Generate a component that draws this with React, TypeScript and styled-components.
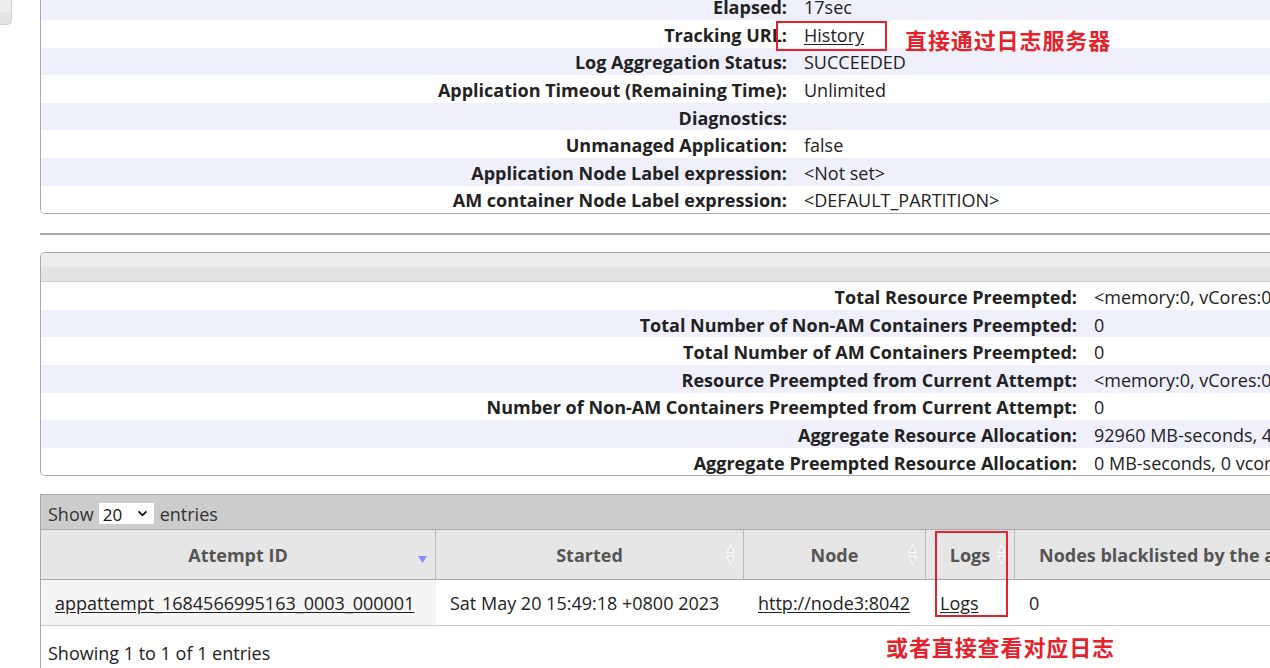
import React from 'react'
import styled, { createGlobalStyle } from 'styled-components'

const GlobalStyle = createGlobalStyle`
  html, body {
    margin: 0;
    padding: 0;
    background: #fff;
    overflow: hidden;
  }
  body {
    font-family: 'Open Sans', 'Noto Sans', 'Noto Sans CJK SC', sans-serif;
    font-size: 18px;
    color: #222;
  }
`

const appInfo = [
  ['Elapsed:', '17sec'],
  ['Tracking URL:', 'History'],
  ['Log Aggregation Status:', 'SUCCEEDED'],
  ['Application Timeout (Remaining Time):', 'Unlimited'],
  ['Diagnostics:', ''],
  ['Unmanaged Application:', 'false'],
  ['Application Node Label expression:', '<Not set>'],
  ['AM container Node Label expression:', '<DEFAULT_PARTITION>'],
]

const preemptInfo = [
  ['Total Resource Preempted:', '<memory:0, vCores:0>'],
  ['Total Number of Non-AM Containers Preempted:', '0'],
  ['Total Number of AM Containers Preempted:', '0'],
  ['Resource Preempted from Current Attempt:', '<memory:0, vCores:0>'],
  ['Number of Non-AM Containers Preempted from Current Attempt:', '0'],
  ['Aggregate Resource Allocation:', '92960 MB-seconds, 46 vcore-seconds'],
  ['Aggregate Preempted Resource Allocation:', '0 MB-seconds, 0 vcore-seconds'],
]

const App: React.FC = () => {
  return (
    <>
      <GlobalStyle />
      <StyledPage>
        <StyledNavStub />
        <StyledContent>
          <InfoPanel rows={appInfo} labelWidth={754} linkRow={1} first />
          <StyledRule />
          <InfoPanel rows={preemptInfo} labelWidth={1044} header shadeOdd />
          <AttemptTable />
        </StyledContent>

        <StyledMarkBox className='history' />
        <StyledNote className='top'>直接通过日志服务器</StyledNote>
        <StyledMarkBox className='logs' />
        <StyledNote className='bottom'>或者直接查看对应日志</StyledNote>
      </StyledPage>
    </>
  )
}

export default App

const StyledPage = styled.div`
  position: relative;
  display: flex;
  align-items: flex-start;
  gap: 28px;
  width: 1700px;
  height: 668px;
`

const StyledNavStub = styled.div`
  width: 11px;
  height: 24px;
  flex-shrink: 0;
  background: linear-gradient(#ededed 50%, #e4e4e4 50%);
  border: 1px solid #d0d0d0;
  border-top: none;
  border-left: none;
  border-radius: 0 0 5px 0;
`

const StyledContent = styled.div`
  flex: 1;
  display: flex;
  flex-direction: column;
`

const StyledRule = styled.div`
  height: 2px;
  background: #aaa;
  margin: 19px 0 17px;
`

type TInfoPanel = {
  rows: string[][]
  labelWidth: number
  linkRow?: number
  header?: boolean
  first?: boolean
  shadeOdd?: boolean
}

const InfoPanel: React.FC<TInfoPanel> = ({
  rows,
  labelWidth,
  linkRow,
  header,
  first,
  shadeOdd,
}) => {
  return (
    <StyledPanel first={first}>
      {header && <StyledPanelHead />}
      {rows.map(([label, value], i) => (
        <StyledInfoRow key={label} shaded={shadeOdd ? i % 2 === 1 : i % 2 === 0}>
          <StyledLabel style={{ width: labelWidth }}>{label}</StyledLabel>
          <StyledValue>
            {i === linkRow ? <StyledLink>{value}</StyledLink> : value}
          </StyledValue>
        </StyledInfoRow>
      ))}
    </StyledPanel>
  )
}

const StyledPanel = styled.div<{ first?: boolean }>`
  margin-top: ${({ first }) => (first ? '-8.5px' : '0')};
  border: 1px solid #aaa;
  border-right: none;
  border-radius: ${({ first }) => (first ? '0 0 0 5px' : '5px 0 0 5px')};
  overflow: hidden;
`

const StyledPanelHead = styled.div`
  height: 28px;
  background: linear-gradient(#ededed 50%, #e4e4e4 50%);
  border-bottom: 1px solid #ccc;
`

const StyledInfoRow = styled.div<{ shaded: boolean }>`
  display: flex;
  align-items: center;
  box-sizing: border-box;
  height: 27.6px;
  padding-top: 2px;
  background: ${({ shaded }) => (shaded ? '#f0f0fc' : '#fff')};
  white-space: nowrap;
`

const StyledLabel = styled.div`
  flex-shrink: 0;
  box-sizing: border-box;
  padding-right: 8px;
  text-align: right;
  font-weight: 700;
  color: #222;
`

const StyledValue = styled.div`
  padding-left: 9px;
  color: #222;
`

const StyledLink = styled.span`
  text-decoration: underline;
  text-underline-offset: 2px;
  color: #222;
`

const columns = [
  { title: 'Attempt ID', width: 395, sorted: true },
  { title: 'Started', width: 308 },
  { title: 'Node', width: 182 },
  { title: 'Logs', width: 89 },
  { title: 'Nodes blacklisted by the app master', width: 500, left: true },
]

const AttemptTable: React.FC = () => {
  return (
    <StyledTableBox>
      <StyledToolbar>
        Show
        <StyledSelectWrap>
          <StyledSelect defaultValue='20'>
            <option value='20'>20</option>
          </StyledSelect>
          <StyledChevron viewBox='0 0 12 8'>
            <path d='M1.5 1.5 L6 6 L10.5 1.5' fill='none' stroke='#111' strokeWidth='2' />
          </StyledChevron>
        </StyledSelectWrap>
        entries
      </StyledToolbar>

      <StyledGridRow className='head'>
        {columns.map((c) => (
          <StyledHeadCell key={c.title} width={c.width} left={c.left}>
            {c.title}
            {c.sorted ? (
              <StyledSortIcon viewBox='0 0 12 10'>
                <path d='M1 1 L11 1 L6 9 Z' fill='#8c8cf5' />
              </StyledSortIcon>
            ) : (
              !c.left && (
                <StyledSortIcon viewBox='0 0 12 22' className='both'>
                  <path
                    d='M6 1 L10 9 L2 9 Z M6 21 L10 13 L2 13 Z'
                    fill='#dcdcdc'
                    stroke='#fafafa'
                    strokeWidth='1.2'
                  />
                </StyledSortIcon>
              )
            )}
          </StyledHeadCell>
        ))}
      </StyledGridRow>

      <StyledGridRow>
        <StyledCell width={395} sorted>
          <StyledLink>appattempt_1684566995163_0003_000001</StyledLink>
        </StyledCell>
        <StyledCell width={308}>Sat May 20 15:49:18 +0800 2023</StyledCell>
        <StyledCell width={182}>
          <StyledLink>http://node3:8042</StyledLink>
        </StyledCell>
        <StyledCell width={89}>
          <StyledLink>Logs</StyledLink>
        </StyledCell>
        <StyledCell width={500}>0</StyledCell>
      </StyledGridRow>

      <StyledFooter>Showing 1 to 1 of 1 entries</StyledFooter>
    </StyledTableBox>
  )
}

const StyledTableBox = styled.div`
  margin-top: 18px;
  border-left: 1px solid #aaa;
  border-top: 1px solid #aaa;
  color: #222;
`

const StyledToolbar = styled.div`
  box-sizing: border-box;
  height: 34px;
  display: flex;
  align-items: center;
  gap: 5px;
  padding: 3px 0 0 7px;
  background: #ccc;
  color: #333;
`

const StyledSelectWrap = styled.div`
  position: relative;
  display: flex;
  margin-right: 1px;
`

const StyledSelect = styled.select`
  appearance: none;
  width: 55px;
  height: 21px;
  border: none;
  border-radius: 0;
  background: #fff;
  padding: 0 0 0 4px;
  font-family: inherit;
  font-size: 17px;
  color: #111;
  outline: none;
`

const StyledChevron = styled.svg`
  position: absolute;
  right: 6px;
  top: 7px;
  width: 11px;
  height: 7px;
  pointer-events: none;
`

const StyledGridRow = styled.div`
  display: flex;
  border-bottom: 1px solid #ccc;
  white-space: nowrap;
  &.head {
    height: 49px;
    background: #e6e6e6;
    border-top: 1px solid #aaa;
    border-bottom: 1px solid #aaa;
  }
`

const StyledHeadCell = styled.div<{ width: number; left?: boolean }>`
  position: relative;
  flex-shrink: 0;
  box-sizing: border-box;
  width: ${({ width }) => width}px;
  display: flex;
  align-items: center;
  justify-content: ${({ left }) => (left ? 'flex-start' : 'center')};
  padding-left: ${({ left }) => (left ? '24px' : '0')};
  border-right: 1px solid #bbb;
  font-weight: 700;
  color: #555;
`

const StyledSortIcon = styled.svg`
  position: absolute;
  right: 7px;
  top: 25px;
  width: 11px;
  height: 9px;
  &.both {
    top: 14px;
    width: 11px;
    height: 21px;
  }
`

const StyledCell = styled.div<{ width: number; sorted?: boolean }>`
  flex-shrink: 0;
  box-sizing: border-box;
  width: ${({ width }) => width}px;
  height: 45px;
  display: flex;
  align-items: center;
  padding-left: 14px;
  background: ${({ sorted }) => (sorted ? '#f5f5f5' : '#fff')};
`

const StyledFooter = styled.div`
  padding: 15px 0 0 7px;
  height: 40px;
  color: #222;
`

const StyledMarkBox = styled.div`
  position: absolute;
  border: 2px solid #e5212b;
  box-sizing: border-box;
  &.history {
    left: 776px;
    top: 21px;
    width: 111px;
    height: 30px;
  }
  &.logs {
    left: 935px;
    top: 531px;
    width: 73px;
    height: 86px;
  }
`

const StyledNote = styled.div`
  position: absolute;
  font-family: 'Noto Sans CJK SC', sans-serif;
  font-weight: 700;
  font-size: 22px;
  letter-spacing: 0.9px;
  color: #e5212b;
  white-space: nowrap;
  line-height: 1;
  &.top {
    left: 905px;
    top: 28px;
  }
  &.bottom {
    left: 886px;
    top: 635px;
  }
`
